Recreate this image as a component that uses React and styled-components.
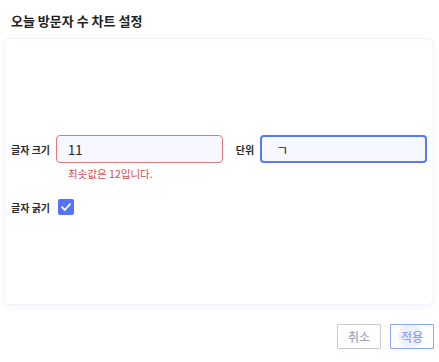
import React from "react";
import styled, { createGlobalStyle } from "styled-components";

const Global = createGlobalStyle`
  html, body { margin: 0; padding: 0; background: #fff; }
  body { font-family: "Noto Sans CJK KR", "Noto Sans", sans-serif; color: #222; }
  * { box-sizing: border-box; }
`;

const Dialog = styled.div`
  width: 439px;
  height: 362px;
  display: flex;
  flex-direction: column;
`;

const Header = styled.div`
  height: 38px;
  display: flex;
  align-items: center;
  padding: 2px 11px 0;
  font-size: 13px;
  font-weight: 700;
  color: #1f1f24;
`;

const Card = styled.div`
  margin: 0 5px 0 4px;
  height: 267px;
  border: 1px solid #f0f1fb;
  border-radius: 6px;
  box-shadow: 0 2px 5px rgba(100, 110, 220, 0.06);
  padding: 7px 6px 0;
  display: flex;
  flex-direction: column;
  justify-content: center;
`;

const Row = styled.div`
  display: grid;
  grid-template-columns: auto 1fr auto 1fr;
  align-items: center;
  column-gap: 6px;
`;

const Label = styled.span`
  font-size: 10px;
  font-weight: 700;
  color: #2a2a30;
  white-space: nowrap;
  margin-left: ${(p) => p.$ml || 0}px;
`;

const Input = styled.div`
  height: 28px;
  border-radius: 4px;
  background: #f6f7ff;
  border: ${(p) => (p.$focus ? "2px solid #5a78f5" : "1.5px solid #e0787e")};
  display: flex;
  align-items: center;
  padding-left: ${(p) => (p.$focus ? 14 : 11)}px;
  font-size: 13px;
  color: #222;
`;

const ErrorText = styled.div`
  grid-column: 2;
  margin-top: 3px;
  font-size: 10.5px;
  color: #d9474f;
  padding-left: 12px;
`;

const CheckRow = styled.div`
  display: flex;
  align-items: center;
  gap: 8px;
  margin-top: 18px;
`;

const Check = styled.div`
  width: 16px;
  height: 16px;
  border-radius: 2px;
  background: #5473f6;
  display: flex;
  align-items: center;
  justify-content: center;
`;

const Footer = styled.div`
  display: flex;
  justify-content: flex-end;
  gap: 9px;
  padding: 19px 5px 0 0;
`;

const Button = styled.button`
  position: relative;
  overflow: hidden;
  width: 44px;
  height: 25px;
  border: 1.5px solid ${(p) => (p.$primary ? "#8ea6ff" : "#c8cbde")};
  border-radius: 1px;
  background: #fff;
  color: ${(p) => (p.$primary ? "#8c9ff2" : "#a3a6b8")};
  font-family: "Noto Sans CJK KR", "Noto Sans", sans-serif;
  font-size: 12px;
  font-weight: 500;
  padding: 0;
  display: flex;
  align-items: center;
  justify-content: center;
  &::before {
    content: "";
    display: ${(p) => (p.$primary ? "block" : "none")};
    position: absolute;
    width: 24px;
    height: 24px;
    border-radius: 50%;
    background: #eef1ff;
    left: 7px;
    top: -1px;
  }
  span { position: relative; }
`;

export default function App() {
  return (
    <>
      <Global />
      <Dialog>
        <Header>오늘 방문자 수 차트 설정</Header>
        <Card>
          <Row>
            <Label>글자 크기</Label>
            <Input>11</Input>
            <Label $ml={7}>단위</Label>
            <Input $focus>ㄱ</Input>
            <ErrorText>최솟값은 12입니다.</ErrorText>
          </Row>
          <CheckRow>
            <Label>글자 굵기</Label>
            <Check>
              <svg width="12" height="12" viewBox="0 0 12 12">
                <path d="M2 6.2 L4.8 9 L10 3.2" fill="none" stroke="#fff" strokeWidth="1.8" strokeLinecap="round" strokeLinejoin="round" />
              </svg>
            </Check>
          </CheckRow>
        </Card>
        <Footer>
          <Button><span>취소</span></Button>
          <Button $primary><span>적용</span></Button>
        </Footer>
      </Dialog>
    </>
  );
}
